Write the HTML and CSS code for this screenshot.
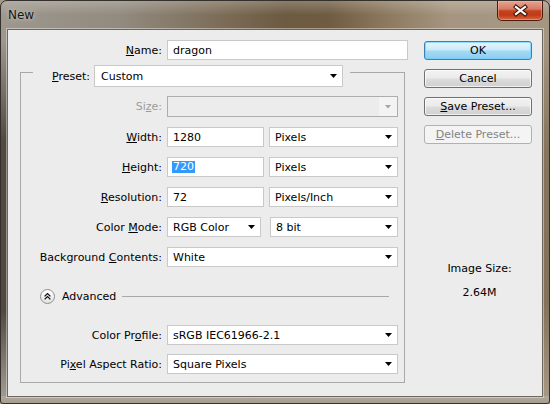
FILE: index.html
```html
<!DOCTYPE html>
<html>
<head>
<meta charset="utf-8">
<link rel="stylesheet" href="styles.css">
</head>
<body>
<div class="window">
  <div class="titlebar">
    <span class="title">New</span>
    <div class="close">
      <svg width="46" height="20" viewBox="0 0 46 20">
        <path d="M19 7 L28 14 M28 7 L19 14" stroke="#3a1408" stroke-width="4.2" stroke-linecap="square" fill="none"/>
        <path d="M19 7 L28 14 M28 7 L19 14" stroke="#ffffff" stroke-width="2.2" stroke-linecap="square" fill="none"/>
      </svg>
    </div>
  </div>
  <div class="client">
    <div class="form">
      <div class="frow name-row">
        <span class="lbl name-lbl"><u>N</u>ame:</span>
        <div class="field w-name">dragon</div>
      </div>
      <div class="group">
        <div class="legend">
          <span class="legend-lbl"><u>P</u>reset:</span>
          <div class="field select w-preset"><span class="val">Custom</span><span class="arrow"></span></div>
        </div>
        <div class="frow size-row">
          <span class="lbl disabled-lbl">Si<u>z</u>e:</span>
          <div class="field select disabled w-full"><span class="val"></span><span class="arrow-box"><span class="arrow gray"></span></span></div>
        </div>
        <div class="frow">
          <span class="lbl"><u>W</u>idth:</span>
          <div class="field w-num">1280</div>
          <div class="field select w-unit"><span class="val">Pixels</span><span class="arrow"></span></div>
        </div>
        <div class="frow">
          <span class="lbl"><u>H</u>eight:</span>
          <div class="field w-num"><span class="sel">720</span></div>
          <div class="field select w-unit"><span class="val">Pixels</span><span class="arrow"></span></div>
        </div>
        <div class="frow">
          <span class="lbl"><u>R</u>esolution:</span>
          <div class="field w-num">72</div>
          <div class="field select w-unit"><span class="val">Pixels/Inch</span><span class="arrow"></span></div>
        </div>
        <div class="frow">
          <span class="lbl">Color <u>M</u>ode:</span>
          <div class="field select w-mode"><span class="val">RGB Color</span><span class="arrow"></span></div>
          <div class="field select w-bit"><span class="val">8 bit</span><span class="arrow"></span></div>
        </div>
        <div class="frow">
          <span class="lbl">Background <u>C</u>ontents:</span>
          <div class="field select w-full"><span class="val">White</span><span class="arrow"></span></div>
        </div>
        <div class="adv">
          <span class="adv-icon">
            <svg width="13" height="13" viewBox="0 0 13 13">
              <path d="M3.6 6.4 L6.5 3.6 L9.4 6.4 M3.6 9.4 L6.5 6.6 L9.4 9.4" stroke="#111" stroke-width="1.3" fill="none"/>
            </svg>
          </span>
          <span class="adv-text">Advanced</span>
          <span class="adv-line"></span>
        </div>
        <div class="frow profile-row">
          <span class="lbl">Color Pr<u>o</u>file:</span>
          <div class="field select w-full"><span class="val">sRGB IEC61966-2.1</span><span class="arrow"></span></div>
        </div>
        <div class="frow pixel-row">
          <span class="lbl">Pi<u>x</u>el Aspect Ratio:</span>
          <div class="field select w-full"><span class="val">Square Pixels</span><span class="arrow"></span></div>
        </div>
      </div>
    </div>
    <div class="side">
      <div class="btn btn-default">OK</div>
      <div class="btn">Cancel</div>
      <div class="btn"><u>S</u>ave Preset...</div>
      <div class="btn btn-disabled"><u>D</u>elete Preset...</div>
      <div class="info">
        <div>Image Size:</div>
        <div class="info-val">2.64M</div>
      </div>
    </div>
  </div>
</div>
</body>
</html>
```

FILE: styles.css
```css
* {
  box-sizing: border-box;
}

html, body {
  margin: 0;
  padding: 0;
  background: #a59a8a;
}

body {
  font-family: "DejaVu Sans", sans-serif;
  font-size: 11px;
  color: #000;
  width: 550px;
  height: 404px;
  overflow: hidden;
}

u {
  text-decoration: underline;
  text-underline-offset: 1px;
}

.window {
  width: 550px;
  height: 404px;
  border: 1px solid #34302b;
  border-radius: 7px 7px 3px 3px;
  padding: 0 6px 6px 6px;
  display: flex;
  flex-direction: column;
  overflow: hidden;
  background:
    linear-gradient(to bottom, rgba(255,255,255,0.22), rgba(255,255,255,0) 14px) top left / 100% 28px no-repeat,
    linear-gradient(to bottom, rgba(0,0,0,0) 40px, rgba(35,26,16,0.62) 140px, rgba(35,26,16,0.62) 310px, rgba(0,0,0,0) 392px) left top / 7px 100% no-repeat,
    linear-gradient(to bottom, rgba(0,0,0,0) 40px, rgba(70,45,15,0.32) 150px, rgba(70,45,15,0.35) 300px, rgba(0,0,0,0) 392px) right top / 7px 100% no-repeat,
    linear-gradient(#b0a89b, #a69d90) left bottom / 100% 7px no-repeat,
    linear-gradient(to right, #9d978e 0%, #928a7e 22%, #7c6d58 40%, #6c5a41 52%, #6f5c42 60%, #8b785e 70%, #a69681 82%, #a59682 100%);
}

.titlebar {
  height: 28px;
  flex: none;
  display: flex;
  align-items: flex-start;
  padding-left: 1px;
}

.title {
  margin-top: 7px;
  font-size: 12px;
  line-height: 14px;
  color: #151515;
  text-shadow: 0 0 6px rgba(255,255,255,0.55), 0 0 2px rgba(255,255,255,0.35);
}

.close {
  margin-left: auto;
  width: 46px;
  height: 20px;
  border: 1px solid #4c1a0e;
  border-top: none;
  border-radius: 0 0 5px 5px;
  background: linear-gradient(#e6a393 0%, #d67c64 42%, #c4431f 52%, #c03a18 74%, #d8683e 100%);
  box-shadow: inset 0 0 0 1px rgba(255,190,170,0.45);
  overflow: hidden;
}

.close svg {
  display: block;
  margin: -1px 0 0 -1px;
}

.client {
  flex: 1;
  display: flex;
  background: #ececec;
  border: 1px solid #6c6760;
  box-shadow: 0 0 0 1px rgba(255,255,255,0.4);
}

.form {
  width: 416px;
  flex: none;
  padding-top: 10px;
}

.frow {
  display: flex;
  align-items: center;
  height: 20px;
  margin-top: 10px;
}

.lbl {
  width: 141px;
  flex: none;
  text-align: right;
  margin-right: 5px;
  white-space: nowrap;
}

.name-row {
  margin-top: 0;
}

.name-lbl {
  width: 154px;
}

.disabled-lbl {
  color: #9c9c9c;
}

.field {
  height: 100%;
  flex: none;
  display: flex;
  align-items: center;
  background: #fff;
  border: 1px solid #c9c9c9;
  padding-left: 5px;
  white-space: nowrap;
}

.select .val {
  flex: 1;
}

.arrow {
  width: 7px;
  height: 4px;
  margin-right: 5px;
  background: #000;
  clip-path: polygon(0 0, 100% 0, 50% 100%);
  flex: none;
}

.arrow.gray {
  background: #a5a5a5;
  margin-right: 0;
}

.arrow-box {
  width: 18px;
  height: 100%;
  background: #f3f3f3;
  display: flex;
  align-items: center;
  justify-content: center;
}

.field.disabled {
  background: #ececec;
  border-color: #adadad;
  padding-left: 0;
}

.w-name {
  width: 241px;
}

.w-full {
  width: 231px;
}

.w-num {
  width: 97px;
}

.w-unit {
  width: 129px;
  margin-left: 5px;
}

.w-mode {
  width: 94px;
}

.w-bit {
  width: 128px;
  margin-left: 9px;
}

.sel {
  background: #3399ff;
  color: #fff;
  margin-left: -1px;
  padding: 0 1px;
  line-height: 12px;
}

.group {
  margin: 12px 0 0 12px;
  width: 385px;
  height: 311px;
  border: 1px solid #a9a9a9;
}

.legend {
  display: flex;
  align-items: center;
  height: 22px;
  margin: -8px 0 0 12px;
  padding: 0 7px 0 19px;
  width: fit-content;
  background: #ececec;
}

.legend-lbl {
  width: 37px;
  margin-right: 5px;
  white-space: nowrap;
}

.w-preset {
  width: 249px;
  height: 22px;
  padding-left: 6px;
}

.size-row {
  height: 21px;
  margin-top: 9px;
}

.adv {
  display: flex;
  align-items: center;
  height: 16px;
  margin: 21px 15px 0 0;
  padding-left: 19px;
}

.adv-icon {
  width: 15px;
  height: 15px;
  border-radius: 50%;
  border: 1px solid #8f8f8f;
  background: linear-gradient(#ffffff, #e2e2e2);
  display: flex;
  align-items: center;
  justify-content: center;
  flex: none;
}

.adv-icon svg {
  display: block;
}

.adv-text {
  margin-left: 7px;
}

.adv-line {
  flex: 1;
  height: 1px;
  background: #a9a9a9;
  margin-left: 6px;
}

.profile-row {
  margin-top: 21px;
}

.pixel-row {
  margin-top: 9px;
}

.side {
  width: 108px;
  padding-top: 11px;
  display: flex;
  flex-direction: column;
  gap: 9px;
}

.btn {
  height: 19px;
  border: 1px solid #707070;
  border-radius: 3px;
  background: linear-gradient(#f2f2f2 0%, #ebebeb 48%, #dddddd 52%, #cfcfcf 100%);
  box-shadow: inset 0 0 0 1px rgba(255,255,255,0.7);
  display: flex;
  align-items: center;
  justify-content: center;
  white-space: nowrap;
}

.btn-default {
  border-color: #3c7fb1;
  background: linear-gradient(#e8f6fd 0%, #c9e9f8 48%, #a6daf3 52%, #8ccdee 100%);
  box-shadow: inset 0 0 0 1px rgba(110,210,255,0.75);
}

.btn-disabled {
  border-color: #adb2b5;
  background: #f4f4f4;
  box-shadow: none;
  color: #838383;
}

.info {
  margin-top: 109px;
  text-align: center;
  line-height: 13px;
  padding-left: 3px;
}

.info-val {
  margin-top: 11px;
}
```
